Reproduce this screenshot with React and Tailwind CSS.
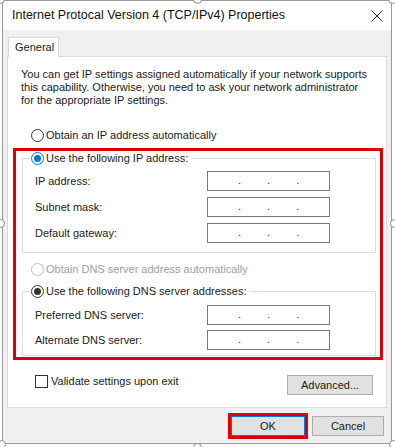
const font = { fontFamily: '"Liberation Sans", Arial, sans-serif' };

function Radio({ checked, tone = 'dark', disabled }) {
  const ring = disabled ? 'border-[#bcbcbc]' : tone === 'blue' ? 'border-[#0078d7]' : 'border-[#333333]';
  const dot = tone === 'blue' ? 'bg-[#0078d7]' : 'bg-[#333333]';
  return (
    <span className={`w-[13px] h-[13px] rounded-full border bg-white flex items-center justify-center shrink-0 ${ring}`}>
      {checked && <span className={`w-[7px] h-[7px] rounded-full ${dot}`} />}
    </span>
  );
}

function IpBox() {
  return (
    <div className="w-[123px] h-[20px] border border-[#7a7a7a] bg-white flex items-end pl-[30px] pb-[4px] gap-[26px] text-[11px] leading-[11px] text-[#333]">
      <span>.</span>
      <span>.</span>
      <span>.</span>
    </div>
  );
}

function Field({ label }) {
  return (
    <div className="flex items-center h-[20px]">
      <span className="w-[184px] pl-[12px]">{label}</span>
      <IpBox />
    </div>
  );
}

function Group({ legend, tone, children, inner }) {
  return (
    <fieldset className="ml-[6px] w-[354px] border border-[#dcdcdc]">
      <legend className="ml-[7px] pl-[1px] pr-[3px] flex items-center gap-[2px] h-[14px]">
        <Radio checked tone={tone} />
        <span>{legend}</span>
      </legend>
      <div className={`flex flex-col ${inner}`}>{children}</div>
    </fieldset>
  );
}

function Handle({ className }) {
  return <span className={`absolute w-[9px] h-[9px] rounded-full bg-white border border-[#8a8a8a] ${className}`} />;
}

export default function App() {
  return (
    <div className="relative w-[395px] h-[447px] bg-white overflow-hidden text-[11px] text-[#1a1a1a]" style={font}>
      <div className="ml-[2px] w-[390px] h-[444px] border border-[#9a9a9a] flex flex-col">
        {/* Title bar */}
        <div className="h-[29px] bg-white flex items-center justify-between pl-[9px] pr-[7px]">
          <span className="text-[12.5px] text-[#111]">Internet Protocal Version 4 (TCP/IPv4) Properties</span>
          <svg width="12" height="12" viewBox="0 0 12 12" className="mr-[1px]">
            <path d="M0.5 0.5 L11.5 11.5 M11.5 0.5 L0.5 11.5" stroke="#222" strokeWidth="1" />
          </svg>
        </div>

        {/* Body */}
        <div className="flex-1 bg-[#f0f0f0] px-[4px] pt-[7px] flex flex-col">
          <div className="ml-[1px] w-[51px] h-[20px] border border-b-0 border-[#d9d9d9] bg-white relative z-10 -mb-px flex items-center pl-[6px]">
            General
          </div>
          <div className="h-[352px] border border-[#d9d9d9] bg-white flex flex-col">
            <p className="pl-[13px] pt-[11px] leading-[13px]">
              You can get IP settings assigned automatically if your network supports
              <br />
              this capability. Otherwise, you need to ask your network administrator
              <br />
              for the appropriate IP settings.
            </p>

            <div className="mt-[21px] pl-[23px] flex items-center gap-[2px] h-[14px]">
              <Radio />
              <span>Obtain an IP address automatically</span>
            </div>

            {/* Highlighted section */}
            <div className="mt-[6px] ml-[5px] w-[370px] h-[212px] border-[3px] border-[#e10000] flex flex-col">
              <Group legend="Use the following IP address:" tone="blue" inner="pt-[6px] pb-[9px] gap-[6px]">
                <Field label="IP address:" />
                <Field label="Subnet mask:" />
                <Field label="Default gateway:" />
              </Group>

              <div className="mt-[9px] ml-[15px] flex items-center gap-[2px] h-[14px] text-[#a0a0a0]">
                <Radio disabled />
                <span>Obtain DNS server address automatically</span>
              </div>

              <div className="mt-[8px]">
                <Group legend="Use the following DNS server addresses:" inner="pt-[7px] pb-[5px] gap-[5px]">
                  <Field label="Preferred DNS server:" />
                  <Field label="Alternate DNS server:" />
                </Group>
              </div>
            </div>

            <div className="mt-[15px] pl-[27px] pr-[13px] flex justify-between items-start">
              <div className="flex items-center gap-[3px] h-[13px]">
                <span className="w-[13px] h-[13px] border border-[#333] bg-white" />
                <span>Validate settings upon exit</span>
              </div>
              <button className="w-[86px] h-[20px] bg-[#e1e1e1] border border-[#adadad] flex items-center justify-center">
                Advanced...
              </button>
            </div>
          </div>

          <div className="mt-[5px] pr-[3px] flex justify-end items-center gap-[4px]">
            <div className="w-[80px] h-[26px] border-[3px] border-[#e10000]">
              <button className="w-full h-full bg-[#e1e1e1] border border-[#0078d7] flex items-center justify-center">
                OK
              </button>
            </div>
            <button className="w-[72px] h-[20px] bg-[#e1e1e1] border border-[#adadad] flex items-center justify-center">
              Cancel
            </button>
          </div>
        </div>
      </div>

      {/* selection handles */}
      <Handle className="-left-[4px] -top-[5px]" />
      <Handle className="left-[193px] -top-[5px]" />
      <Handle className="-right-[2px] -top-[5px]" />
      <Handle className="-left-[4px] top-[219px]" />
      <Handle className="-right-[4px] top-[219px]" />
      <Handle className="-left-[3px] -bottom-[2px]" />
      <Handle className="left-[193px] -bottom-[5px]" />
      <Handle className="-right-[3px] -bottom-[2px]" />
    </div>
  );
}
